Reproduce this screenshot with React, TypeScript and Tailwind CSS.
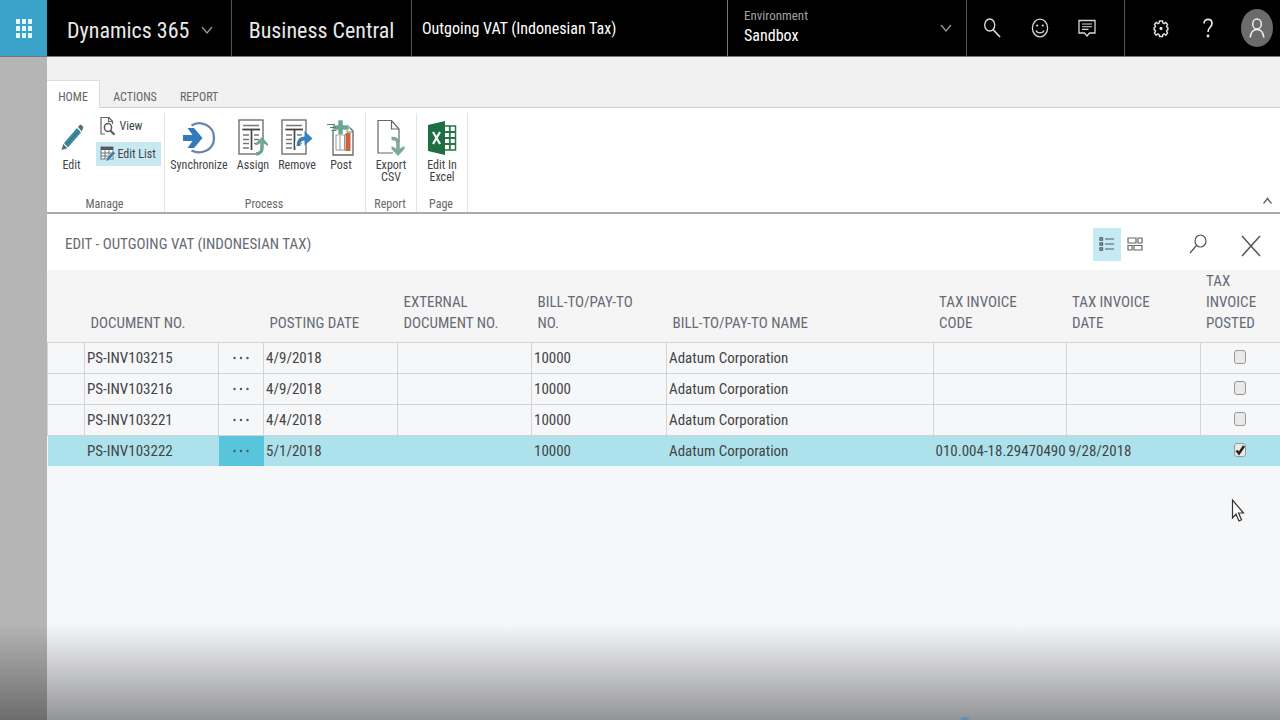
import * as React from 'react';

type Invoice = {
  documentNo: string;
  postingDate: string;
  billToNo: string;
  name: string;
  taxCode: string;
  taxDate: string;
  posted: boolean;
};

const invoices: Invoice[] = [
  { documentNo: 'PS-INV103215', postingDate: '4/9/2018', billToNo: '10000', name: 'Adatum Corporation', taxCode: '', taxDate: '', posted: false },
  { documentNo: 'PS-INV103216', postingDate: '4/9/2018', billToNo: '10000', name: 'Adatum Corporation', taxCode: '', taxDate: '', posted: false },
  { documentNo: 'PS-INV103221', postingDate: '4/4/2018', billToNo: '10000', name: 'Adatum Corporation', taxCode: '', taxDate: '', posted: false },
  { documentNo: 'PS-INV103222', postingDate: '5/1/2018', billToNo: '10000', name: 'Adatum Corporation', taxCode: '010.004-18.29470490', taxDate: '9/28/2018', posted: true },
];

function WaffleIcon() {
  return (
    <svg width="18" height="20" viewBox="0 0 18 20" fill="#e6fbff">
      {[0, 7, 14].map((y) =>
        [1, 7, 13].map((x) => <rect key={`${x}-${y}`} x={x} y={y + 1} width="4" height="5" />)
      )}
    </svg>
  );
}

function ChevronIcon() {
  return (
    <svg width="12" height="8" viewBox="0 0 12 8" fill="none" stroke="#9a9a9a" strokeWidth="1.2">
      <path d="M1 1l5 6 5-6" />
    </svg>
  );
}

function SearchIcon() {
  return (
    <svg width="18" height="20" viewBox="0 0 18 20" fill="none" stroke="#d8d8d8" strokeWidth="1.4">
      <ellipse cx="6.7" cy="7" rx="5" ry="6" />
      <path d="M10 11.5l7 7.5" strokeWidth="1.8" />
    </svg>
  );
}

function SmileIcon() {
  return (
    <svg width="18" height="20" viewBox="0 0 18 20" fill="none" stroke="#d8d8d8" strokeWidth="1.3">
      <ellipse cx="9" cy="10" rx="7.6" ry="8.8" />
      <path d="M5 12.5c1.5 3.2 6.5 3.2 8 0" />
      <circle cx="6.2" cy="7.5" r="1.1" fill="#d8d8d8" stroke="none" />
      <circle cx="11.8" cy="7.5" r="1.1" fill="#d8d8d8" stroke="none" />
    </svg>
  );
}

function FeedbackIcon() {
  return (
    <svg width="18" height="18" viewBox="0 0 18 18" fill="none" stroke="#d8d8d8" strokeWidth="1.3">
      <path d="M1 1.5h16v12.5h-5.5l-2.5 3-2.5-3H1z" />
      <path d="M4 5h10M4 7.7h10M4 10.4h6.5" strokeWidth="1.1" />
    </svg>
  );
}

function GearIcon() {
  return (
    <svg width="16" height="19" viewBox="0 0 18 20" fill="none" stroke="#e2e2e2" strokeWidth="1.6" strokeLinejoin="round">
      <path d="M7.3 1.5h3.4l.5 2.5 1.3.6 1.9-1.5 2 2.4-1.2 2 .5 1.2h1v3h-1l-.5 1.3 1.2 2.2-2 2.3-1.9-1.5-1.3.6-.5 2.4H7.3l-.5-2.4-1.3-.6-1.9 1.5-2-2.3 1.2-2.2-.5-1.3h-1v-3h1l.5-1.2-1.2-2 2-2.4 1.9 1.5 1.3-.6z" />
      <ellipse cx="9" cy="10" rx="1.7" ry="1.9" fill="#e2e2e2" stroke="none" />
    </svg>
  );
}

function HelpIcon() {
  return (
    <svg width="12" height="20" viewBox="0 0 12 20" fill="none" stroke="#e8e8e8" strokeWidth="1.7">
      <path d="M2 5.5C2 -.2 10 0 10 5.3c0 4-4 4-4 8.7" />
      <circle cx="6" cy="18" r="1.4" fill="#e8e8e8" stroke="none" />
    </svg>
  );
}

function PersonIcon() {
  return (
    <svg width="16" height="20" viewBox="0 0 16 20" fill="none" stroke="#f0f0f0" strokeWidth="1.5">
      <ellipse cx="8" cy="6" rx="4.3" ry="5" />
      <path d="M1.2 19.5c.5-4.8 3-8 6.8-8s6.3 3.2 6.8 8" />
    </svg>
  );
}

function PencilIcon() {
  return (
    <svg width="24" height="28" viewBox="0 0 24 28">
      <path d="M4 19L17 4l4 4.5L8 23.5z" fill="#3a8a9a" />
      <path d="M18 3l1.5-1.7c.7-.8 1.7-.6 2.3 0l1 1.2c.6.7.6 1.5 0 2.2L21.8 7.5z" fill="#4b6f85" />
      <path d="M3.3 20l4 4.3L1.5 26z" fill="#4b6f85" />
      <path d="M6 21L19 6.2" stroke="#2c6f86" strokeWidth="1" />
    </svg>
  );
}

function ViewIcon() {
  return (
    <svg width="16" height="20" viewBox="0 0 16 20" fill="none" stroke="#666" strokeWidth="1.2">
      <path d="M5 18H1V1.5h8l3.500 3.800V8M8.500 1.500v4h4" />
      <ellipse cx="8" cy="11.5" rx="3.6" ry="4" stroke="#555" strokeWidth="1.5" />
      <path d="M10.5 14.8l4 4" stroke="#555" strokeWidth="2" />
    </svg>
  );
}

function EditListIcon() {
  return (
    <svg width="16" height="18" viewBox="0 0 16 18" fill="none" stroke="#6b7378" strokeWidth="1">
      <rect x="1" y="2" width="12" height="12" fill="#fff" />
      <path d="M1 3.5h12" strokeWidth="3" stroke="#555" />
      <path d="M1 8h12M1 11h12M5 3v11M9 3v11" />
      <path d="M5.5 16.5l1-3.5 6.5-7.5 2.5 2.7-6.5 7.3z" fill="#3f83ad" stroke="#fff" strokeWidth=".6" />
    </svg>
  );
}

function SynchronizeIcon() {
  return (
    <svg width="34" height="34" viewBox="0 0 34 34" fill="none">
      <path d="M9.5 4.5C18-1 32 4 32 17S18 34 9.5 29.5" stroke="#6684ad" strokeWidth="2.3" />
      <path d="M1 14h9.5l-5-7H12l8.5 10L12 27H5.500l5-7H1z" fill="#3479bb" />
    </svg>
  );
}

function DocumentLines() {
  return (
    <>
      <rect x="1" y="1" width="24" height="34" fill="#fff" stroke="#666" strokeWidth="1.3" />
      <path d="M5 6.5h16M4 10.5h18M5 16h6M5 20.5h6M5 24.5h6M5 29h6M16 16h5M16 20.5h5M16 24.5h5" stroke="#777" strokeWidth="1.5" />
      <path d="M13.5 11v20M5 10.5h17" stroke="#444" strokeWidth="1.7" />
    </>
  );
}

function AssignIcon() {
  return (
    <svg width="30" height="38" viewBox="0 0 30 38" fill="none">
      <DocumentLines />
      <path d="M18 36c5-.5 6.5-2 6.5-6v-6" stroke="#fff" strokeWidth="5.5" />
      <path d="M18 35c4.5-.5 6-2 6-6v-5" stroke="#6da58e" strokeWidth="3.5" />
      <path d="M17.5 26.5v-2L24 18l6 7v2l-6-3.5z" fill="#6da58e" />
    </svg>
  );
}

function RemoveIcon() {
  return (
    <svg width="32" height="38" viewBox="0 0 32 38" fill="none">
      <DocumentLines />
      <path d="M17 27c0-6 2.5-8 7-8h2" stroke="#fff" strokeWidth="6" />
      <path d="M17.5 27c0-5.5 2-7.5 6.5-7.5h2" stroke="#3b80bb" strokeWidth="3.8" />
      <path d="M23.5 12l8 7.5-8 7z" fill="#3b80bb" />
    </svg>
  );
}

function PostIcon() {
  return (
    <svg width="28" height="38" viewBox="0 0 28 38" fill="none">
      <path d="M6 11v25h20V12l-6-6" fill="#fff" stroke="#666" strokeWidth="1.3" />
      <path d="M20 6v7h6" stroke="#777" strokeWidth="1" />
      <path d="M9 16h14M9 16v15M13 16v15M17.5 16v15M9 31h14" stroke="#999" strokeWidth="1" />
      <rect x="18.5" y="14" width="5" height="18" fill="#c9643d" />
      <path d="M11 1h5v5h6v5h-6v5h-5v-5H5.5V6H11z" fill="#6da58e" stroke="#fff" strokeWidth=".6" />
      <path d="M0 5.5h8M3 8.5h6M4.5 11.5h5" stroke="#5d7d70" strokeWidth="1" />
    </svg>
  );
}

function ExportIcon() {
  return (
    <svg width="28" height="38" viewBox="0 0 28 38" fill="none">
      <path d="M16 34H1V1.5h13.5L22 10v14" fill="#fff" stroke="#666" strokeWidth="1.2" />
      <path d="M14.5 1.5V10H22" stroke="#666" strokeWidth="1.2" />
      <path d="M14.5 19.5c5-.5 6.5 2 6.5 6v5" stroke="#7fa99b" strokeWidth="3.5" />
      <path d="M14.5 27l6.5 3.5 6.5-3.5v3L21 37l-6.500-7z" fill="#7fa99b" />
    </svg>
  );
}

function ExcelIcon() {
  return (
    <svg width="30" height="34" viewBox="0 0 30 34" fill="none">
      <rect x="17" y="5" width="11.5" height="24" fill="#fff" stroke="#2b7149" strokeWidth="1.5" />
      <path d="M17 11h12M17 17h12M17 23h12M22.8 5v24" stroke="#2b7149" strokeWidth="1.8" />
      <path d="M1 4l17-4v34L1 30z" fill="#1f6e43" />
      <path d="M6 11l7 12M13 11L6 23" stroke="#fff" strokeWidth="2.2" />
    </svg>
  );
}

function ListViewIcon() {
  return (
    <svg width="16" height="14" viewBox="0 0 16 14" fill="none" stroke="#4b5a60" strokeWidth="1.2">
      <path d="M6 2h9M6 7h9M6 12h9" />
      <path d="M1 .8h2.5v2.4H1zM1 5.8h2.5v2.4H1zM1 10.8h2.5v2.4H1z" />
    </svg>
  );
}

function TileViewIcon() {
  return (
    <svg width="16" height="14" viewBox="0 0 16 14" fill="none" stroke="#666" strokeWidth="1.2">
      <path d="M1 1h8v5H1zM11 1h4v5h-4zM1 8.5h4V13H1zM7 8.5h8V13H7z" />
    </svg>
  );
}

function FindIcon() {
  return (
    <svg width="18" height="20" viewBox="0 0 18 20" fill="none" stroke="#555" strokeWidth="1.2">
      <ellipse cx="11.5" cy="7" rx="5.5" ry="6" />
      <path d="M7.5 11.5L1 19" />
    </svg>
  );
}

function CloseIcon() {
  return (
    <svg width="20" height="22" viewBox="0 0 20 22" fill="none" stroke="#555" strokeWidth="1.5">
      <path d="M1 1l18 20M19 1L1 21" />
    </svg>
  );
}

function TopBar() {
  return (
    <header className="flex h-[57px] border-b border-[#777] bg-black text-[#e8e8e8]">
      <button aria-label="App launcher" className="flex w-[47px] shrink-0 items-center justify-center bg-[#3ba3c9]">
        <WaffleIcon />
      </button>
      <button className="flex w-[185px] shrink-0 items-center gap-3 border-r border-[#555] pt-1 pl-5 text-[22px] whitespace-nowrap">
        Dynamics 365
        <ChevronIcon />
      </button>
      <a href="#" className="flex w-[180px] shrink-0 items-center justify-center border-r border-[#555] pt-1 text-[22px] whitespace-nowrap">
        Business Central
      </a>
      <div className="flex min-w-0 flex-1 items-center border-r border-[#777] pt-[2px] pl-[10px] text-[16px] text-white">
        Outgoing VAT (Indonesian Tax)
      </div>
      <button className="flex w-[239px] shrink-0 items-center justify-between border-r border-[#555] pr-[14px] pl-4 text-left">
        <span>
          <span className="block text-[13px] leading-4 text-[#a0a0a0]">Environment</span>
          <span className="block text-[16px] leading-6 text-white">Sandbox</span>
        </span>
        <ChevronIcon />
      </button>
      <div className="flex w-[158px] shrink-0 items-center justify-between border-r border-[#555] pr-7 pl-4">
        <button aria-label="Search"><SearchIcon /></button>
        <button aria-label="Send a smile"><SmileIcon /></button>
        <button aria-label="Feedback"><FeedbackIcon /></button>
      </div>
      <div className="flex w-[155px] shrink-0 items-center justify-between pr-[7px] pl-7">
        <button aria-label="Settings"><GearIcon /></button>
        <button aria-label="Help" className="pl-[6px]"><HelpIcon /></button>
        <button aria-label="Account" className="flex h-[38px] w-8 items-center justify-center rounded-[50%] bg-[#6b6b6b]">
          <PersonIcon />
        </button>
      </div>
    </header>
  );
}

function RibbonGroup({ label, width, children }: { label: string; width: string; children: React.ReactNode }) {
  return (
    <div className={`flex shrink-0 flex-col justify-between border-r border-[#e4e4e4] ${width}`}>
      <div className="flex justify-center">{children}</div>
      <div className="pr-[2px] text-center text-[12px] leading-4 text-[#666]">{label}</div>
    </div>
  );
}

function RibbonButton({ icon, width, children }: { icon: React.ReactNode; width: string; children: React.ReactNode }) {
  return (
    <button className={`flex flex-col items-center text-[12px] leading-3 text-[#444] ${width}`}>
      <span className="flex h-[46px] items-center justify-center pt-1">{icon}</span>
      {children}
    </button>
  );
}

function Ribbon() {
  return (
    <div>
      <nav className="flex items-end bg-[#f1f1f1] pt-[23px] text-[12px] text-[#666]">
        <a href="#" className="h-7 w-[53px] border-t border-r border-[#dcdcdc] bg-white text-center leading-8">HOME</a>
        <a href="#" className="h-7 w-[70px] border-b border-[#d0d0d0] text-center leading-[34px]">ACTIONS</a>
        <a href="#" className="h-7 flex-1 border-b border-[#d0d0d0] pl-[10px] leading-[34px]">REPORT</a>
      </nav>
      <div className="flex h-[106px] border-b-2 border-[#aaa] bg-white pt-[5px]">
        <RibbonGroup label="Manage" width="w-[118px]">
          <RibbonButton icon={<PencilIcon />} width="w-12">Edit</RibbonButton>
          <div className="flex flex-col pr-[3px] text-[12px] text-[#444]">
            <button className="flex h-[29px] items-center gap-1 px-1 pb-1"><ViewIcon />View</button>
            <button className="flex h-6 w-[65px] items-center gap-[2px] bg-[#c9e9f2] px-1 whitespace-nowrap"><EditListIcon />Edit List</button>
          </div>
        </RibbonGroup>
        <RibbonGroup label="Process" width="w-[201px]">
          <RibbonButton icon={<SynchronizeIcon />} width="w-[64px]">Synchronize</RibbonButton>
          <RibbonButton icon={<AssignIcon />} width="w-11">Assign</RibbonButton>
          <RibbonButton icon={<RemoveIcon />} width="w-11">Remove</RibbonButton>
          <RibbonButton icon={<PostIcon />} width="w-11">Post</RibbonButton>
        </RibbonGroup>
        <RibbonGroup label="Report" width="w-[51px]">
          <RibbonButton icon={<ExportIcon />} width="w-12"><span>Export<br />CSV</span></RibbonButton>
        </RibbonGroup>
        <RibbonGroup label="Page" width="w-[51px]">
          <RibbonButton icon={<ExcelIcon />} width="w-12"><span>Edit In<br />Excel</span></RibbonButton>
        </RibbonGroup>
        <button aria-label="Collapse ribbon" className="mt-auto mr-2 mb-2 ml-auto rotate-180">
          <svg width="9" height="7" viewBox="0 0 9 7" fill="none" stroke="#666" strokeWidth="1.5">
            <path d="M.5 .5l4 5 4-5" />
          </svg>
        </button>
      </div>
    </div>
  );
}

function InvoiceTable() {
  const cell = 'border border-[#d2d4d8] px-[2px] pt-[2px] whitespace-nowrap';
  return (
    <table className="w-full table-fixed border-collapse text-[15px] text-[#444]">
      <colgroup>
        <col className="w-[37px]" />
        <col className="w-[134px]" />
        <col className="w-[45px]" />
        <col className="w-[134px]" />
        <col className="w-[134px]" />
        <col className="w-[135px]" />
        <col />
        <col className="w-[133px]" />
        <col className="w-[134px]" />
        <col className="w-[80px]" />
      </colgroup>
      <thead>
        <tr className="h-[72px] bg-[#f5f5f6] text-left align-bottom leading-[21px] text-[#666a73] [&>th]:px-[6px] [&>th]:pb-2 [&>th]:font-normal">
          <th></th>
          <th>DOCUMENT NO.</th>
          <th></th>
          <th>POSTING DATE</th>
          <th>EXTERNAL<br />DOCUMENT NO.</th>
          <th>BILL-TO/PAY-TO<br />NO.</th>
          <th>BILL-TO/PAY-TO NAME</th>
          <th>TAX INVOICE<br />CODE</th>
          <th>TAX INVOICE<br />DATE</th>
          <th>TAX INVOICE POSTED</th>
        </tr>
      </thead>
      <tbody>
        {invoices.map((row) => (
          <tr key={row.documentNo} className={row.posted ? 'h-[31px] bg-[#ade2ed] [&>td]:border-transparent' : 'h-[31px]'}>
            <td className={cell}></td>
            <td className={cell}>{row.documentNo}</td>
            <td className={row.posted ? 'bg-[#58c5dc] text-center' : 'border border-[#d2d4d8] text-center'}>
              <button aria-label={`Look up ${row.documentNo}`} className="block w-full">
                <svg width="16" height="4" viewBox="0 0 16 4" fill="#555" className="mx-auto">
                  <circle cx="1.5" cy="2" r="1.2" />
                  <circle cx="8" cy="2" r="1.2" />
                  <circle cx="14.5" cy="2" r="1.2" />
                </svg>
              </button>
            </td>
            <td className={cell}>{row.postingDate}</td>
            <td className={cell}></td>
            <td className={cell}>{row.billToNo}</td>
            <td className={cell}>{row.name}</td>
            <td className={cell}>{row.taxCode}</td>
            <td className={cell}>{row.taxDate}</td>
            <td className="border border-r-0 border-[#d2d4d8] pb-[2px]">
              <label className="relative mx-auto block h-[14px] w-3">
                <input
                  type="checkbox"
                  aria-label={`Tax invoice posted ${row.documentNo}`}
                  defaultChecked={row.posted}
                  className="peer block h-[14px] w-3 appearance-none rounded-[3px] border border-[#999] bg-[#e9e9e9]"
                />
                <svg width="12" height="14" viewBox="0 0 12 14" fill="none" stroke="#2b2222" strokeWidth="2.5" className="pointer-events-none absolute inset-0 hidden peer-checked:block">
                  <path d="M2.5 7.5L5 10.5 10 3" />
                </svg>
              </label>
            </td>
          </tr>
        ))}
      </tbody>
    </table>
  );
}

export default function App() {
  return (
    <div className="relative flex min-h-screen flex-col overflow-hidden bg-[#f6f7f9] font-['Roboto_Condensed',Roboto,sans-serif]">
      <TopBar />
      <div className="flex flex-1">
        <aside className="w-[47px] shrink-0 bg-[#b5b5b5]"></aside>
        <main className="min-w-0 flex-1">
          <Ribbon />
          <div className="flex h-14 items-center bg-white pt-1 pr-[19px] pl-[18px]">
            <h1 className="flex-1 text-[15px] text-[#666a73]">EDIT - OUTGOING VAT (INDONESIAN TAX)</h1>
            <button aria-label="List view" className="flex h-[33px] w-7 items-center justify-center bg-[#c5eaf3]"><ListViewIcon /></button>
            <button aria-label="Tile view" className="flex h-[33px] w-7 items-center justify-center"><TileViewIcon /></button>
            <button aria-label="Find" className="ml-10"><FindIcon /></button>
            <button aria-label="Close" className="ml-[34px] pt-1"><CloseIcon /></button>
          </div>
          <InvoiceTable />
        </main>
      </div>

      {/* Shade along the bottom edge */}
      <div className="pointer-events-none absolute inset-x-0 bottom-0 h-[96px] bg-linear-to-b from-transparent to-black/40"></div>
      <div className="pointer-events-none absolute bottom-[-7px] left-[75%] h-[10px] w-[10px] rounded-full bg-[#5d8fc4]"></div>

      {/* Mouse pointer */}
      <svg className="pointer-events-none absolute top-[499px] right-[35px]" width="14" height="24" viewBox="0 0 14 24" fill="#fff" stroke="#333" strokeWidth="1.2">
        <path d="M1.5 1v18l3.5-4 3 7 2.5-1.2-3-6.8h5z" />
      </svg>
    </div>
  );
}
